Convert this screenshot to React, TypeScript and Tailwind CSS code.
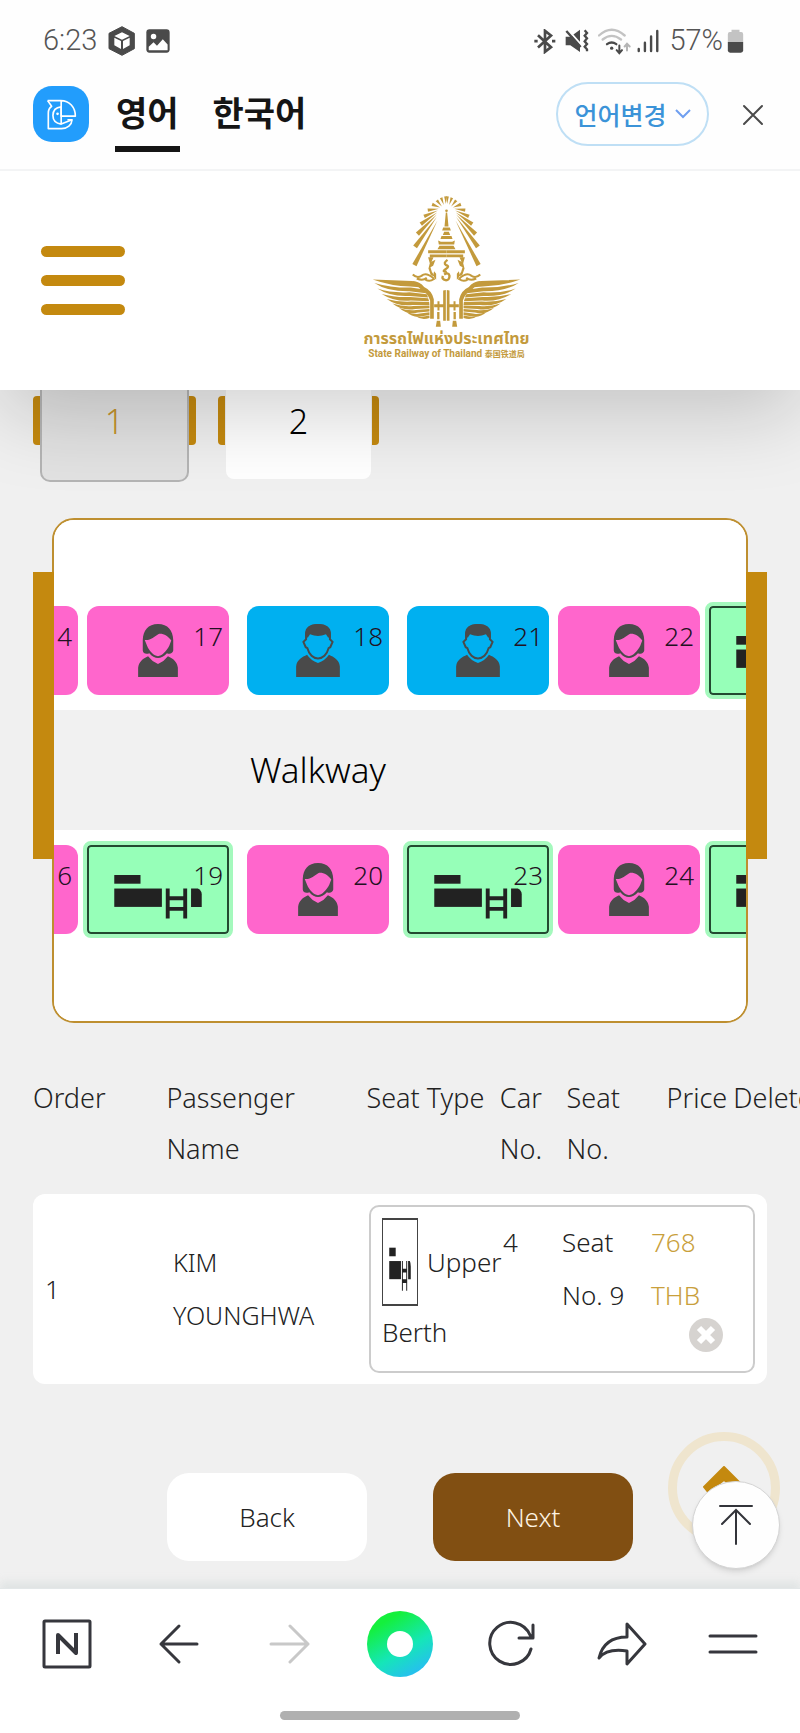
import { useState } from 'react'
import { clsx } from 'clsx'

type SeatKind = 'female' | 'male' | 'berth'

type Seat = {
  no: string
  kind: SeatKind
  gap: string
}

const UPPER_SEATS: Seat[] = [
  { no: '14', kind: 'female', gap: 'mr-[9px]' },
  { no: '17', kind: 'female', gap: 'mr-[18px]' },
  { no: '18', kind: 'male', gap: 'mr-[18px]' },
  { no: '21', kind: 'male', gap: 'mr-[9px]' },
  { no: '22', kind: 'female', gap: 'mr-[9px]' },
  { no: '25', kind: 'berth', gap: 'mr-[18px]' },
]

const LOWER_SEATS: Seat[] = [
  { no: '16', kind: 'female', gap: 'mr-[9px]' },
  { no: '19', kind: 'berth', gap: 'mr-[18px]' },
  { no: '20', kind: 'female', gap: 'mr-[18px]' },
  { no: '23', kind: 'berth', gap: 'mr-[9px]' },
  { no: '24', kind: 'female', gap: 'mr-[9px]' },
  { no: '27', kind: 'berth', gap: 'mr-[18px]' },
]

// [outer x, outer y, inner x, inner y, width at the outer end]
const RAYS = [
  [219, 256, 288, 122, 14],
  [221, 201, 286, 112, 14],
  [228, 163, 286, 104, 13],
  [238, 133, 287, 98, 12],
  [248, 110, 289, 92, 11],
  [259, 91, 292, 87, 10],
  [272, 74, 296, 83, 10],
  [286, 62, 301, 80, 9],
  [299, 54, 307, 76, 8],
  [312, 50, 313, 73, 8],
]

const FEATHERS = [
  'M94 299 L212 303 Q236 307 244 323 L206 320 Q150 319 94 299Z',
  'M99 309 Q150 324 208 323 L248 329 L254 340 L204 334 Q138 335 99 309Z',
  'M108 326 Q150 340 204 337 L256 343 L260 353 L204 348 Q146 351 108 326Z',
  'M121 342 Q160 353 206 351 L260 355 L263 364 L208 362 Q158 366 121 342Z',
  'M136 357 Q170 367 210 365 L263 366 L264 375 L214 375 Q168 380 136 357Z',
  'M153 371 Q185 381 216 378 L264 377 L264 385 L222 387 Q182 394 153 371Z',
  'M173 384 Q200 393 224 390 L264 387 L264 395 L230 398 Q198 405 173 384Z',
  'M195 396 Q220 404 236 401 L264 397 L264 405 L242 409 Q214 414 195 396Z',
  'M222 408 Q240 413 264 407 L264 414 Q240 422 222 408Z',
]

function Ray({ data }: { data: number[] }) {
  const [ox, oy, ix, iy, width] = data
  const length = Math.hypot(ox - ix, oy - iy)
  const nx = ((oy - iy) / length) * (width / 2)
  const ny = (-(ox - ix) / length) * (width / 2)
  return <path d={`M${ix} ${iy} L${ox + nx} ${oy + ny} L${ox - nx} ${oy - ny}Z`} />
}

function EmblemHalf() {
  return (
    <g>
      {RAYS.map((ray) => (
        <Ray key={ray[1]} data={ray} />
      ))}
      {FEATHERS.map((d) => (
        <path key={d} d={d} />
      ))}
      <path d="M212 303 Q236 304 248 321 Q272 332 277 358 V416 H266 V362 Q260 340 240 330Z" />
      {/* scroll work beside the pavilion */}
      <path
        d="M214 284 Q226 296 240 288 Q250 280 262 286 Q276 292 278 300 M226 296 Q244 304 256 294 M252 300 Q266 306 276 298"
        fill="none"
        stroke="currentColor"
        strokeWidth="6"
      />
      <path d="M260 211 H315 V220 H260Z M265 224 H315 V232 H265Z M260 232 L276 233 L270 246 L282 240 L275 258 L267 262 L271 276 L280 290 L268 286 L261 266 L265 250Z" />
      <path d="M284 300 Q272 290 278 274 L284 282Z M288 364 H294 V373 H308 V382 H294 V392 H288 V382 H278 V373 H288Z M287 396 H294 V418 H287Z M286 422 H296 L298 440 H283Z" />
    </g>
  )
}

function RailwayEmblem() {
  return (
    <svg viewBox="92 46 446 398" className="h-[133px] w-[149px] text-[#c39a3c]" fill="currentColor" aria-hidden="true">
      <EmblemHalf />
      <g transform="translate(630 0) scale(-1 1)">
        <EmblemHalf />
      </g>
      <circle cx="315" cy="93" r="4" />
      <path d="M313 98 H317 L321 140 H309Z" />
      <path d="M305 143 H325 L328 152 H302Z M308 156 H322 L326 166 H304Z M300 169 H330 L333 178 H297Z M290 182 L298 186 H332 L340 182 L338 194 H292Z M294 198 H336 L342 208 H288Z" />
      <path
        d="M318 240 Q304 250 314 256 Q326 260 312 268 Q300 276 316 276 M308 284 Q322 276 324 288 Q324 302 312 301 Q300 298 304 288"
        fill="none"
        stroke="currentColor"
        strokeWidth="7"
      />
      <path d="M305 332 L313 330 V422 H305Z M316 330 L324 332 V422 H316Z" />
    </svg>
  )
}

function WomanIcon() {
  return (
    <svg viewBox="0 0 120 160" className="h-[53px] w-10 text-[#4a4a4a]" fill="currentColor" aria-hidden="true">
      <path
        fillRule="evenodd"
        d="M60 0 C30 0 15 20 14 48 V80 C15 90 25 92 34 88 C40 97 52 103 60 103 C68 103 80 97 87 88 C96 92 105 88 106 80 V48 C105 20 90 0 60 0Z M20 48 C38 50 48 38 62 30 C76 28 90 36 100 50 L94 66 C86 82 72 97 60 97 C48 97 33 82 27 66Z"
      />
      <path d="M0 160 V132 C2 114 14 104 30 97 Q42 113 60 121 Q78 113 90 97 C106 104 118 114 120 132 V160Z" />
    </svg>
  )
}

function ManIcon() {
  return (
    <svg viewBox="0 0 132 160" className="h-[53px] w-11 text-[#4a4a4a]" fill="currentColor" aria-hidden="true">
      <path
        d="M30 30 C30 10 44 3 66 3 C88 3 102 10 102 30 V46 L110 54 L103 70 L98 73 C93 92 80 104 66 104 C52 104 39 92 34 73 L29 70 L22 54 L30 46Z"
        fill="none"
        stroke="currentColor"
        strokeWidth="6"
      />
      <path d="M28 44 C24 14 42 0 66 0 C90 0 108 14 104 44 L96 40 L90 31 Q66 41 42 31 L36 40Z" />
      <path d="M0 160 V128 C2 108 18 100 33 93 Q44 110 66 118 Q88 110 99 93 C114 100 130 108 132 128 V160Z" />
    </svg>
  )
}

function BerthIcon({ className }: { className: string }) {
  return (
    <svg viewBox="0 0 142 88" preserveAspectRatio="none" className={className} fill="#222" aria-hidden="true">
      <rect x="26" y="29" width="27" height="9" />
      <rect x="26" y="43" width="49" height="19" />
      <path d="M79 43 h4 v8 h14 v-8 h4 v31 h-4 v-8 h-14 v8 h-4Z M83 55 v7 h14 v-7Z" fillRule="evenodd" />
      <path d="M105 43 h7 q4 2 4 6 v13 h-11Z" />
    </svg>
  )
}

function SeatButton({ seat }: { seat: Seat }) {
  return (
    <button
      type="button"
      aria-label={`Seat ${seat.no}`}
      className={clsx(
        'relative flex h-[89px] w-[142px] shrink-0 items-center justify-center',
        seat.gap,
        seat.kind === 'female' && 'rounded-xl bg-[#ff66cc]',
        seat.kind === 'male' && 'rounded-xl bg-[#00b0f0]',
        seat.kind === 'berth' && 'rounded-sm bg-[#96ffb8] outline-4 outline-[#a4f9bd]',
      )}
    >
      {seat.kind === 'female' && <WomanIcon />}
      {seat.kind === 'male' && <ManIcon />}
      {seat.kind === 'berth' && (
        <span className="block h-full w-full rounded-[4px] border-2 border-[#234a31]">
          <BerthIcon className="h-full w-full" />
        </span>
      )}
      <span className="absolute top-3 right-1.5 text-[26px] leading-9 text-[#221122]">{seat.no}</span>
    </button>
  )
}

function SeatRow({ seats, className }: { seats: Seat[]; className: string }) {
  return (
    <div className={clsx('flex overflow-hidden bg-white', className)}>
      <div className="-ml-[118px] flex">
        {seats.map((seat) => (
          <SeatButton key={seat.no} seat={seat} />
        ))}
      </div>
    </div>
  )
}

function StatusBar() {
  return (
    <div className="flex h-20 items-center justify-between pt-0.5 pr-14 pl-[43px] font-['Roboto',sans-serif] text-[29px] text-[#555]">
      <div className="flex items-center">
        <span>6:23</span>
        <svg viewBox="325 76 82 90" className="ml-[11px] h-[30px] w-7" aria-hidden="true">
          <path d="M366 78 L403 98 V144 L366 164 L327 144 V98Z" fill="#4a4a4a" stroke="#4a4a4a" strokeWidth="3" strokeLinejoin="round" />
          <path d="M366 95 L389 106 L366 117 L343 106Z M343 111 L363 121 V145 L343 134Z M389 111 L369 121 V145 L389 134Z" fill="#fff" />
        </svg>
        <svg viewBox="435 86 70 70" className="ml-2.5 h-6 w-6" aria-hidden="true">
          <rect x="436" y="87" width="68" height="68" rx="9" fill="#4a4a4a" />
          <circle cx="457" cy="108" r="8" fill="#fff" />
          <path d="M443 138 L457 125 L467 135 L484 116 L498 131 V148 H443Z" fill="#fff" />
        </svg>
      </div>
      <div className="flex items-center">
        <svg viewBox="403 83 66 74" className="h-[25px] w-[22px]" fill="none" stroke="#4a4a4a" strokeWidth="8" aria-hidden="true">
          <path d="M415 101 L454 137 L436 151 V88 L454 102 L415 138" />
          <path d="M404 119 h10 M457 119 h10" />
        </svg>
        <svg viewBox="498 84 72 72" className="ml-[9px] h-6 w-6" aria-hidden="true">
          <path d="M500 107 H514 L543 86 V153 L514 133 H500Z" fill="#4a4a4a" />
          <path d="M505 84 L549 134" stroke="#fff" strokeWidth="6" />
          <path d="M502 90 L545 138" stroke="#4a4a4a" strokeWidth="7" />
          <path d="M557 88 l7 8 -7 8 7 8 -7 9 7 8 -7 8 7 8 v6" fill="none" stroke="#4a4a4a" strokeWidth="7" />
        </svg>
        <svg viewBox="597 78 99 80" className="ml-[9px] h-[27px] w-[33px]" fill="none" strokeLinecap="round" aria-hidden="true">
          <path d="M600 100 Q638 66 677 100 M611 112 Q638 90 666 112" stroke="#c3c3c3" strokeWidth="7" />
          <path d="M624 126 Q638 116 652 126" stroke="#4a4a4a" strokeWidth="7" />
          <circle cx="638" cy="138" r="5" fill="#4a4a4a" />
          <path d="M661 130 V150 M653 144 L661 153 L669 144" stroke="#4a4a4a" strokeWidth="6" />
          <path d="M684 145 V126 M677 133 L684 125 L692 133" stroke="#b5b5b5" strokeWidth="6" />
        </svg>
        <svg viewBox="714 84 64 70" className="ml-1.5 h-6 w-[22px]" fill="none" stroke="#4a4a4a" strokeWidth="7" strokeLinecap="round" aria-hidden="true">
          <path d="M719 142 V148 M737 124 V148 M755 106 V148 M773 90 V148" />
        </svg>
        <span className="ml-2.5">57%</span>
        <svg viewBox="981 84 50 72" className="ml-1 h-6 w-[17px]" aria-hidden="true">
          <path d="M994 86 H1018 V93 H1023 Q1029 93 1029 100 V124 H983 V100 Q983 93 989 93 H994Z" fill="#c3c3c3" />
          <path d="M983 123 H1029 V148 Q1029 155 1022 155 H990 Q983 155 983 148Z" fill="#4a4a4a" />
        </svg>
      </div>
    </div>
  )
}

function TranslateBar() {
  const [language, setLanguage] = useState('영어')

  return (
    <div className="flex h-[91px] items-start border-b-2 border-[#f3f4f5] pr-9 pl-[33px] font-['Noto_Sans_CJK_KR',sans-serif]">
      <div className="mt-1.5 flex h-14 w-14 shrink-0 items-center justify-center rounded-[19px] bg-[#229dfc]">
        <svg viewBox="143 295 94 94" className="h-[31px] w-[31px]" fill="none" stroke="#fff" strokeWidth="5" strokeLinejoin="round" aria-hidden="true">
          <path d="M148 300 H188 C214 300 232 320 232 347 H189 V300" />
          <path d="M148 300 L160 317 Q150 324 150 338 V385 H190 C208 385 221 374 222 358 H208" />
          <path d="M189 319 C171 321 164 332 164 345 C164 360 174 369 189 371 V319 M189 371 L222 358" />
          <circle cx="178" cy="340" r="4" fill="#fff" stroke="none" />
        </svg>
      </div>
      <div className="ml-[26px] flex gap-8">
        {['영어', '한국어'].map((item) => (
          <button
            key={item}
            type="button"
            onClick={() => setLanguage(item)}
            className={clsx(
              'flex h-[72px] items-center border-b-[6px] px-px pb-0.5 text-[34px] leading-none font-bold text-[#151515]',
              language === item ? 'border-[#151515]' : 'border-transparent',
            )}
          >
            {item}
          </button>
        ))}
      </div>
      <button
        type="button"
        className="mt-0.5 ml-auto flex h-16 w-[153px] items-center justify-center gap-2 rounded-full border-2 border-[#bfdff5] text-[25px] leading-none font-medium text-[#3b93d8]"
      >
        언어변경
        <svg viewBox="0 0 16 10" className="h-2.5 w-4" fill="none" stroke="#6f9ff0" strokeWidth="2" aria-hidden="true">
          <path d="M1 1 L8 8 L15 1" />
        </svg>
      </button>
      <button type="button" aria-label="닫기" className="mt-6 ml-[33px]">
        <svg viewBox="0 0 22 22" className="h-[22px] w-[22px]" stroke="#4a4a4a" strokeWidth="2" strokeLinecap="round" aria-hidden="true">
          <path d="M2 2 L20 20 M20 2 L2 20" />
        </svg>
      </button>
    </div>
  )
}

function SiteHeader() {
  return (
    <header className="relative z-10 grid h-[219px] grid-cols-[1fr_auto_1fr] items-center bg-white px-[41px] shadow-[0_24px_80px_rgba(0,0,0,0.18)]">
      <button type="button" aria-label="Menu" className="flex w-[84px] flex-col gap-[18px]">
        <span className="h-[11px] rounded-full bg-[#c4890f]" />
        <span className="h-[11px] rounded-full bg-[#c4890f]" />
        <span className="h-[11px] rounded-full bg-[#c4890f]" />
      </button>
      <a href="#" className="ml-[93px] flex flex-col items-center pb-1.5 whitespace-nowrap text-[#c39a3c]">
        <RailwayEmblem />
        <span className="font-['Noto_Sans','Noto_Sans_Thai',sans-serif] text-base leading-5 font-bold">การรถไฟแห่งประเทศไทย</span>
        <span className="font-['Liberation_Sans_Narrow','Roboto',sans-serif] text-[10px] leading-3 font-bold">
          State Railway of Thailand <span className="font-['Noto_Sans_CJK_SC',sans-serif] text-[8px]">泰国铁道局</span>
        </span>
      </a>
      <span />
    </header>
  )
}

function CarTabs() {
  return (
    <nav aria-label="Cars" className="-mt-8 flex h-[124px] items-center px-[33px] text-[34px]">
      <span className="h-[49px] w-[7px] rounded-l-[4px] bg-[#c4890f]" />
      <button type="button" className="h-full w-[149px] rounded-[10px] border-2 border-[#b4b4b4] bg-[#e2e2e2] pt-0.5 text-[#c4932c]">
        1
      </button>
      <span className="h-[49px] w-[7px] rounded-r-[4px] bg-[#c4890f]" />
      <span className="ml-[22px] h-[49px] w-[7px] rounded-l-[4px] bg-[#c4890f]" />
      <button type="button" className="mx-px h-[118px] w-[145px] rounded-lg bg-white pt-0.5 text-black">
        2
      </button>
      <span className="h-[49px] w-[7px] rounded-r-[4px] bg-[#c4890f]" />
    </nav>
  )
}

function Coach() {
  return (
    <section aria-label="Coach plan" className="mt-9 flex px-[33px]">
      <div className="relative mt-[54px] -mr-0.5 h-[287px] w-[21px] shrink-0 bg-[#c4890f]" />
      <div className="min-w-0 flex-1 overflow-hidden rounded-[22px] border-2 border-[#be8f30] bg-white">
        <SeatRow seats={UPPER_SEATS} className="pt-[86px] pb-[15px]" />
        <div className="flex h-[120px] items-center bg-[#f1f1f1] pl-[196px] text-[35px] text-black">Walkway</div>
        <SeatRow seats={LOWER_SEATS} className="pt-[15px] pb-[87px]" />
      </div>
      <div className="relative mt-[54px] -ml-0.5 h-[287px] w-[21px] shrink-0 bg-[#c4890f]" />
    </section>
  )
}

function BookingTable() {
  return (
    <table className="mt-[49px] block overflow-hidden pl-[33px] text-left text-[26px] text-[#222]">
      <thead className="block">
        <tr className="grid grid-cols-[4fr_6fr_4fr_2fr_3fr_2fr_2fr] text-[27px] leading-[51px]">
          <th className="min-w-0 font-light">Order</th>
          <th className="min-w-0 font-light">
            Passenger
            <br />
            Name
          </th>
          <th className="min-w-0 font-light whitespace-nowrap">Seat Type</th>
          <th className="min-w-0 font-light">Car No.</th>
          <th className="min-w-0 font-light">
            Seat
            <br />
            No.
          </th>
          <th className="min-w-0 font-light">Price</th>
          <th className="min-w-0 font-light">Delete</th>
        </tr>
      </thead>
      <tbody className="block pt-5 pr-[33px]">
        <tr className="flex items-center rounded-xl bg-white px-3 py-[11px] leading-[53px]">
          <td className="w-32 shrink-0">1</td>
          <td className="w-[196px] shrink-0 pr-12 text-[25px]">KIM YOUNGHWA</td>
          <td className="flex h-[168px] min-w-0 flex-1 rounded-[10px] border-2 border-[#ccc] px-[11px]">
            <div className="flex w-[121px] shrink-0 flex-wrap content-start items-center pt-[11px]">
              <span className="mr-[9px] block h-[88px] w-9 border-y-2 border-x border-[#444]">
                <BerthIcon className="h-full w-full" />
              </span>
              <span>Upper</span>
              <span className="w-full">Berth</span>
            </div>
            <div className="w-[59px] shrink-0 pt-[9px]">4</div>
            <div className="w-[89px] shrink-0 pt-[9px]">
              Seat
              <br />
              No. 9
            </div>
            <div className="flex flex-1 flex-col pt-[9px] text-[#c9a03c]">
              768
              <br />
              THB
              <button type="button" aria-label="Delete seat" className="-mt-1 ml-[38px] h-[34px] w-[34px]">
                <svg viewBox="0 0 34 34" aria-hidden="true">
                  <circle cx="17" cy="17" r="17" fill="#d6d3d0" />
                  <path d="M10 10 L24 24 M24 10 L10 24" stroke="#fff" strokeWidth="6" />
                </svg>
              </button>
            </div>
          </td>
        </tr>
      </tbody>
    </table>
  )
}

function ScrollTop() {
  return (
    <div className="absolute top-12 right-5 h-[137px] w-28">
      <span className="absolute top-0 left-0 flex h-28 w-28 items-center justify-center rounded-full border-[9px] border-[#efe5ce]">
        <svg viewBox="0 0 44 44" className="h-11 w-11" aria-hidden="true">
          <path d="M22 1 L42 21 L38 26 L22 14 L6 26 L2 21Z" fill="#c4890f" stroke="#c4890f" strokeWidth="2" strokeLinejoin="round" />
        </svg>
      </span>
      <button
        type="button"
        aria-label="Back to top"
        className="absolute right-0 bottom-0 flex h-[88px] w-[88px] items-center justify-center rounded-full border border-[#d4d4d4] bg-[#fefefe] shadow-md"
      >
        <svg viewBox="0 0 34 42" className="h-[42px] w-[34px]" fill="none" stroke="#33343a" strokeWidth="2" strokeLinecap="round" aria-hidden="true">
          <path d="M1 2 H33 M17 6 V40 M3 20 L17 6 L31 20" />
        </svg>
      </button>
    </div>
  )
}

function BrowserBar() {
  const item = 'flex h-[66px] items-center justify-center'
  return (
    <footer className="relative border-t border-[#e3e7e8] bg-white pb-3 shadow-[0_-6px_8px_rgba(200,210,210,0.4)]">
      <div className="grid grid-cols-7 px-[11px] pt-[22px] text-[#36373d]">
        <button type="button" aria-label="Naver home" className={item}>
          <svg viewBox="0 0 50 50" className="h-[50px] w-[50px]" fill="none" stroke="currentColor" strokeLinecap="round" strokeLinejoin="round" aria-hidden="true">
            <rect x="2" y="2" width="46" height="46" rx="1" strokeWidth="3" />
            <path d="M16 35 V16 L34 34 V14" strokeWidth="4" strokeLinecap="butt" />
          </svg>
        </button>
        <button type="button" aria-label="Go back" className={item}>
          <svg viewBox="0 0 42 42" className="h-[42px] w-[42px]" fill="none" stroke="currentColor" strokeWidth="3" strokeLinecap="round" strokeLinejoin="round" aria-hidden="true">
            <path d="M22 3 L4 21 L22 39 M4 21 H40" />
          </svg>
        </button>
        <button type="button" aria-label="Go forward" className="flex h-[66px] items-center justify-center text-[#c8c8c8]">
          <svg viewBox="0 0 42 42" className="h-[42px] w-[42px]" fill="none" stroke="currentColor" strokeWidth="3" strokeLinecap="round" strokeLinejoin="round" aria-hidden="true">
            <path d="M22 3 L40 21 L22 39 M40 21 H3" />
          </svg>
        </button>
        <button type="button" aria-label="Green dot" className={item}>
          <span className="flex h-[66px] w-[66px] items-center justify-center rounded-full bg-linear-[150deg,#14f03c_20%,#15e6b8_58%,#2bb4ff_95%]">
            <span className="h-[26px] w-[26px] rounded-full bg-white" />
          </span>
        </button>
        <button type="button" aria-label="Reload" className={item}>
          <svg viewBox="0 0 48 48" className="h-12 w-12" fill="none" stroke="currentColor" strokeWidth="3" strokeLinecap="round" strokeLinejoin="round" aria-hidden="true">
            <path d="M44 29 A21 21 0 1 1 43 15 L45 18 M46 5 V18 H32" />
          </svg>
        </button>
        <button type="button" aria-label="Share" className={item}>
          <svg viewBox="0 0 50 46" className="h-[46px] w-[50px]" fill="none" stroke="currentColor" strokeWidth="3" strokeLinecap="round" strokeLinejoin="round" aria-hidden="true">
            <path d="M30 3 L48 23 L30 43 V30 Q10 27 2 37 Q7 16 30 16Z" />
          </svg>
        </button>
        <button type="button" aria-label="More" className={item}>
          <svg viewBox="0 0 50 20" className="h-5 w-[50px]" fill="none" stroke="currentColor" strokeWidth="3" strokeLinecap="round" aria-hidden="true">
            <path d="M2 2 H48 M2 18 H48" />
          </svg>
        </button>
      </div>
      <div className="mx-auto mt-[34px] h-[9px] w-[30%] rounded-full bg-[#b0b0b0]" />
    </footer>
  )
}

export default function App() {
  return (
    <div className="overflow-hidden bg-[#f0f0f0] font-['Noto_Sans',sans-serif] font-light">
      <div className="relative z-20 bg-[#fefefe]">
        <StatusBar />
        <TranslateBar />
      </div>
      <SiteHeader />
      <main>
        <CarTabs />
        <Coach />
        <BookingTable />
        <div className="relative flex justify-center gap-[66px] pt-[89px] pb-[27px] text-[26px]">
          <button type="button" className="h-[88px] w-[200px] rounded-[22px] bg-white text-[#222]">
            Back
          </button>
          <button type="button" className="h-[88px] w-[200px] rounded-[22px] bg-[#814f12] text-[#fdf3e2]">
            Next
          </button>
          <ScrollTop />
        </div>
      </main>
      <BrowserBar />
    </div>
  )
}
